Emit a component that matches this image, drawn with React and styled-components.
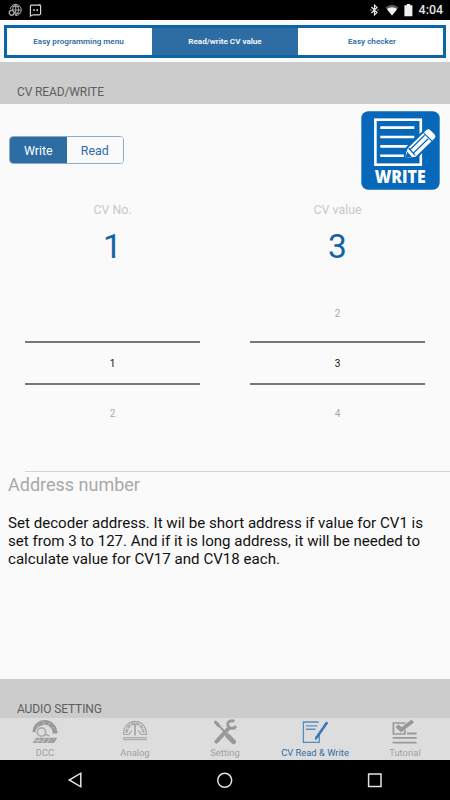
import styled, { createGlobalStyle } from "styled-components";

const tabs = ["Easy programming menu", "Read/write CV value", "Easy checker"];

const App = () => {
    return (
        <>
            <GlobalStyle />
            <Screen>
                <StatusBar>
                    <StatusGroup $gap={7}>
                        <GlobeIcon />
                        <MessageIcon />
                    </StatusGroup>
                    <StatusGroup $gap={5.5}>
                        <BluetoothIcon />
                        <WifiIcon />
                        <BatteryIcon />
                        <Clock>4:04</Clock>
                    </StatusGroup>
                </StatusBar>
                <TopTabs>
                    {tabs.map((tab, i) => (
                        <TopTab key={tab} $active={i === 1}>{tab}</TopTab>
                    ))}
                </TopTabs>
                <SectionTitle $height={42}>CV READ/WRITE</SectionTitle>
                <Content>
                    <Actions>
                        <Segment>
                            <SegmentItem $active>Write</SegmentItem>
                            <SegmentItem>Read</SegmentItem>
                        </Segment>
                        <WriteButton />
                    </Actions>
                    <Pickers>
                        <Picker label="CV No." value="1" next="2" />
                        <Picker label="CV value" prev="2" value="3" next="4" />
                    </Pickers>
                    <Divider />
                    <Description>
                        <h2>Address number</h2>
                        <p>
                            Set decoder address. It wil be short address if value for CV1 is<br />
                            set from 3 to 127. And if it is long address, it will be needed to<br />
                            calculate value for CV17 and CV18 each.
                        </p>
                    </Description>
                </Content>
                <SectionTitle $height={39}>AUDIO SETTING</SectionTitle>
                <BottomTabs>
                    <BottomTab><DccIcon />DCC</BottomTab>
                    <BottomTab><AnalogIcon />Analog</BottomTab>
                    <BottomTab><SettingIcon />Setting</BottomTab>
                    <BottomTab $active><ReadWriteIcon />CV Read &amp; Write</BottomTab>
                    <BottomTab><TutorialIcon />Tutorial</BottomTab>
                </BottomTabs>
                <NavBar>
                    <svg width="20" height="20" viewBox="0 0 20 20"><path d="M15.8 3.2v13.6L4.2 10z" /></svg>
                    <svg width="20" height="20" viewBox="0 0 20 20"><circle cx="9.7" cy="10.3" r="7" /></svg>
                    <svg width="20" height="20" viewBox="0 0 20 20"><path d="M3.6 4h12.4v12.4H3.6z" /></svg>
                </NavBar>
            </Screen>
        </>
    );
};

const Picker = ({ label, prev, value, next }) => (
    <PickerColumn>
        <PickerLabel>{label}</PickerLabel>
        <PickerValue>{value}</PickerValue>
        <Wheel>
            <WheelItem>{prev}</WheelItem>
            <WheelItem $selected>{value}</WheelItem>
            <WheelItem>{next}</WheelItem>
        </Wheel>
    </PickerColumn>
);

//Icons
const GlobeIcon = () => (
    <svg width="14" height="14" viewBox="0 0 14 14" fill="none" stroke="#a9a9a9" strokeWidth="1">
        <path d="M2.1 6.2A5.6 5.6 0 1 1 7.5 12.6M7.7 1.2v11.2M4.6 3.6h6.6M6.5 7h6.6M8 10.2h4M7.5 1.2C4.8 3 4.6 5 4.6 6.6M7.8 1.2c3.6 3.4 3.6 7.8 0 11.2" />
        <circle cx="3.7" cy="9.8" r="2.4" strokeWidth="1.4" />
        <path d="M3.7 7.5 6 5.9M5.9 9.8h1.8" />
    </svg>
);

const MessageIcon = () => (
    <svg width="13" height="14" viewBox="0 0 13 14" fill="none" stroke="#d5d5d5" strokeWidth="1.2">
        <path d="M10.9 1v1.6M2.6 2.2h7.8q1.2 0 1.2 1.2v7.2q0 1.2-1.2 1.2H4.2L1.4 13V3.4q0-1.2 1.2-1.2z" />
        <path d="M4.3 7.1h1.5M7.5 7.1H9" strokeWidth="1.6" />
    </svg>
);

const BluetoothIcon = () => (
    <svg width="9" height="12" viewBox="0 0 9 12" fill="none" stroke="#e8e8e8" strokeWidth="1.2">
        <path d="m1.4 3 5.6 5.6-2.5 2.3V1.1L7 3.4 1.4 9M.4 6h1.2M7.3 6h1.2" />
    </svg>
);

const WifiIcon = () => (
    <svg width="14" height="12" viewBox="0 0 14 12">
        <path d="M7 11.4.4 3.2Q7-1.8 13.6 3.2z" fill="#555" />
        <path d="M7 11.4 1.8 5Q7 1.6 12.2 5z" fill="#f2f2f2" />
    </svg>
);

const BatteryIcon = () => (
    <svg width="9" height="13" viewBox="0 0 9 13">
        <path d="M2.8 0h3.4v1.3h2.2v11H.4v-11h2.4z" fill="#f0f0f0" />
    </svg>
);

const WriteButton = () => (
    <WriteIcon width="79" height="79" viewBox="0 0 79 79">
        <rect x=".3" y=".3" width="78.4" height="78.4" rx="7" fill="#0768b9" />
        <rect x="14.4" y="8.7" width="45.4" height="45" fill="none" stroke="#fff" strokeWidth="2.6" />
        <path d="M19.3 16.6h34M19.3 26h34M19.3 35.4h30M19.3 44.8h25" stroke="#fff" strokeWidth="2.6" />
        <path d="m47 37 18.4-18q2-1.6 3.8 0l4.6 4.8q1.5 2-.4 3.8L54.6 45.8l-10 1q-.2-5 2.4-9.8z" fill="#fff" stroke="#0768b9" strokeWidth="4" />
        <path d="m47 37 18.4-18q2-1.6 3.8 0l4.6 4.8q1.5 2-.4 3.8L54.6 45.8l-10 1q-.2-5 2.4-9.8z" fill="#fff" />
        <path d="m49.2 38.5 14.4-14.2M52.5 42 67.2 27.8M62.6 21.8l8.4 8.4M47.6 37l6.6 7.4" stroke="#0768b9" strokeWidth="1.2" />
        <path d="m46.2 40.8 4.6 5-6.4 1.2z" fill="#0768b9" />
        <text x="39.2" y="72" textAnchor="middle" textLength="51" lengthAdjust="spacingAndGlyphs">WRITE</text>
    </WriteIcon>
);

const DccIcon = () => (
    <svg width="26" height="26" viewBox="0 0 26 26" fill="none">
        <path d="M2.8 13.2C3.8-.2 22-.2 23.2 14.5" stroke="#999" strokeWidth="4.8" />
        <path d="m5.3 6.3 3 2.6M11.2 2.6l1 3.4M18 3.6l-2 3M22 8l-3 2" stroke="#ccc" strokeWidth=".7" />
        <circle cx="9.5" cy="13" r="6" fill="#ddd" />
        <circle cx="9.5" cy="13" r="4.2" stroke="#aaa" strokeWidth="1.7" />
        <path d="m13 15.4 4.4 1.4" stroke="#aaa" strokeWidth="1.7" />
        <path d="M4.2 18.7h21l-3 5.4H.6z" fill="#a2a2a2" />
        <path d="m8 18.7-3 5.4M13 18.7l-3 5.4M18 18.7l-3 5.4M1 21.5h8" stroke="#ccc" strokeWidth=".9" />
    </svg>
);

const AnalogIcon = () => (
    <svg width="26" height="26" viewBox="0 0 26 26" fill="none" stroke="#a5a5a5">
        <path d="M1.5 15.5C1.5-2 24.5-2 24.5 15.5h-5.8q0-2.2-2.8-3.8M7.3 15.5H1.5M7.3 15.5q0-2.2 2.8-3.8" strokeWidth="1.2" />
        <path d="M4.5 13.8C5.5 1.5 20.5 1.5 21.5 13.8" strokeWidth="2.6" strokeDasharray="4 .8" opacity=".8" />
        <path d="M13 4.5V16.5" strokeWidth="1.7" />
        <path d="M1 18.6h24M1 20.5h24" strokeWidth="1.4" opacity=".8" />
    </svg>
);

const SettingIcon = () => (
    <svg width="26" height="26" viewBox="0 0 26 26" fill="none" stroke="#999" strokeLinecap="round">
        <path d="M4.2 3.4 14.5 15" strokeWidth="2" />
        <path d="m3.6 3.2 3 3.4" strokeWidth="3.2" />
        <path d="m15.6 16.8 6 6" strokeWidth="4.8" />
        <path d="M4.4 22.6 17 9" strokeWidth="4" />
        <path d="M22.4 2.2C17.5.5 14.6 4 16.2 7.2c1.5 3 6 3 7.6-.2" strokeWidth="2.9" strokeLinecap="butt" />
    </svg>
);

const ReadWriteIcon = () => (
    <svg width="26" height="26" viewBox="0 0 26 26" fill="none" stroke="#3379b7">
        <path d="M16.8 3H1.4v20.4h15.9V16" strokeWidth="1.3" opacity=".8" />
        <path d="M4 6.9h11.5M4 10.3h9.5" strokeWidth="1.4" opacity=".75" />
        <path d="M25.2 3.2 14.8 18.3" strokeWidth="2.6" />
        <path d="m13.4 17 2.8 1.7-3.2 2.8z" fill="#3379b7" stroke="none" />
    </svg>
);

const TutorialIcon = () => (
    <svg width="26" height="26" viewBox="0 0 26 26" fill="none" stroke="#999">
        <path d="M13.5 4H1.4v11h11.4v-4" strokeWidth="1.7" />
        <path d="m5 6.8 4.2 4L20.8 2" strokeWidth="4" />
        <path d="M15 14.5h9.6M.6 18.9h24M.6 23.6h24" strokeWidth="1.9" />
    </svg>
);

const GlobalStyle = createGlobalStyle`
    *{
        margin: 0;
        padding: 0;
        box-sizing: border-box;
    }
    body{
        font-family: Roboto, sans-serif;
        background: #fafafa;
    }
    svg{
        display: block;
        flex-shrink: 0;
    }
`;
const Screen = styled.div`
    display: flex;
    flex-direction: column;
    width: 450px;
    height: 800px;
    overflow: hidden;
    background: #fafafa;
`;
const StatusBar = styled.div`
    display: flex;
    justify-content: space-between;
    align-items: center;
    height: 20px;
    padding: 0 7px 0 8px;
    background: #000;
`;
const StatusGroup = styled.div`
    display: flex;
    align-items: center;
    gap: ${({ $gap }) => $gap}px;
`;
const Clock = styled.span`
    color: #e4e4e4;
    font-size: 12.4px;
    font-weight: 500;
    line-height: 20px;
`;
const TopTabs = styled.div`
    display: grid;
    grid-template-columns: 145px 146px 1fr;
    height: 33px;
    margin: 4.5px 4px 4.5px 4px;
    border: 3px solid #0b66a8;
    background: #2e6da4;
`;
const TopTab = styled.div`
    display: flex;
    align-items: center;
    justify-content: center;
    color: ${({ $active }) => ($active ? "#fff" : "#2e6da4")};
    background: ${({ $active }) => ($active ? "#2e6da4" : "#fff")};
    font-size: 8.1px;
    font-weight: 600;

    &:first-child{
        padding-right: 2px;
    }
    &:last-child{
        padding-left: 3px;
    }
`;
const SectionTitle = styled.h1`
    height: ${({ $height }) => $height}px;
    padding: 21px 17px 0;
    background: #ccc;
    color: #5e5e5e;
    font-size: 12px;
    font-weight: 400;
    letter-spacing: -0.12px;
    line-height: 18px;
`;
const Content = styled.main`
    height: 575px;
`;
const Actions = styled.div`
    display: flex;
    justify-content: space-between;
    align-items: flex-start;
    height: 96px;
    padding: 7px 10px 0 9px;
`;
const Segment = styled.div`
    display: flex;
    width: 115px;
    height: 28px;
    margin-top: 25px;
    border: 1px solid #8badcb;
    border-radius: 4px;
    overflow: hidden;
`;
const SegmentItem = styled.div`
    flex: 1;
    display: flex;
    align-items: center;
    justify-content: center;
    color: ${({ $active }) => ($active ? "#fff" : "#2e6da4")};
    background: ${({ $active }) => ($active ? "#2e6da4" : "#fafafa")};
    font-size: 12.4px;
`;
const WriteIcon = styled.svg`
    text{
        fill: #fff;
        font-family: "Open Sans", sans-serif;
        font-size: 18px;
        font-weight: 800;
    }
`;
const Pickers = styled.div`
    display: grid;
    grid-template-columns: 1fr 1fr;
    height: 271px;
`;
const PickerColumn = styled.div`
    display: flex;
    flex-direction: column;
    align-items: center;
`;
const PickerLabel = styled.div`
    height: 20px;
    color: #c8c8c8;
    font-size: 12.4px;
    line-height: 20px;
`;
const PickerValue = styled.div`
    height: 52px;
    color: #1463a5;
    font-size: 33.5px;
    line-height: 53px;
`;
const Wheel = styled.div`
    width: 175px;
    padding-top: 16px;
`;
const WheelItem = styled.div`
    display: flex;
    align-items: center;
    justify-content: center;
    height: ${({ $selected }) => ($selected ? 44 : 53)}px;
    border: solid #777;
    border-width: ${({ $selected }) => ($selected ? "2px 0" : "0")};
    color: ${({ $selected }) => ($selected ? "#111" : "#a8a8a8")};
    font-size: 10px;
    padding-bottom: ${({ $selected }) => ($selected ? 0 : 2)}px;

    &:last-child{
        padding: 4px 0 0;
    }
`;
const Divider = styled.hr`
    height: 1px;
    margin-left: 25px;
    border: 0;
    background: #d3d3d3;
`;
const Description = styled.div`
    padding: 2px 8px;
    h2{
        color: #a9a9a9;
        font-size: 18px;
        font-weight: 400;
        line-height: 22px;
    }
    p{
        padding-top: 19.3px;
        color: #111;
        font-size: 15.1px;
        line-height: 17.7px;
        white-space: nowrap;
    }
`;
const BottomTabs = styled.nav`
    display: grid;
    grid-template-columns: repeat(5, 1fr);
    height: 42px;
    background: #ddd;
`;
const BottomTab = styled.div`
    display: flex;
    flex-direction: column;
    align-items: center;
    padding-top: 1px;
    color: ${({ $active }) => ($active ? "#2e6da4" : "#a0a0a0")};
    font-size: 9.4px;
    line-height: 15px;
    white-space: nowrap;
`;
const NavBar = styled.nav`
    display: flex;
    justify-content: space-between;
    align-items: center;
    height: 40px;
    padding: 0 65px;
    background: #000;
    svg{
        fill: none;
        stroke: #e3e3e3;
        stroke-width: 1.5;
    }
`;

export default App;
